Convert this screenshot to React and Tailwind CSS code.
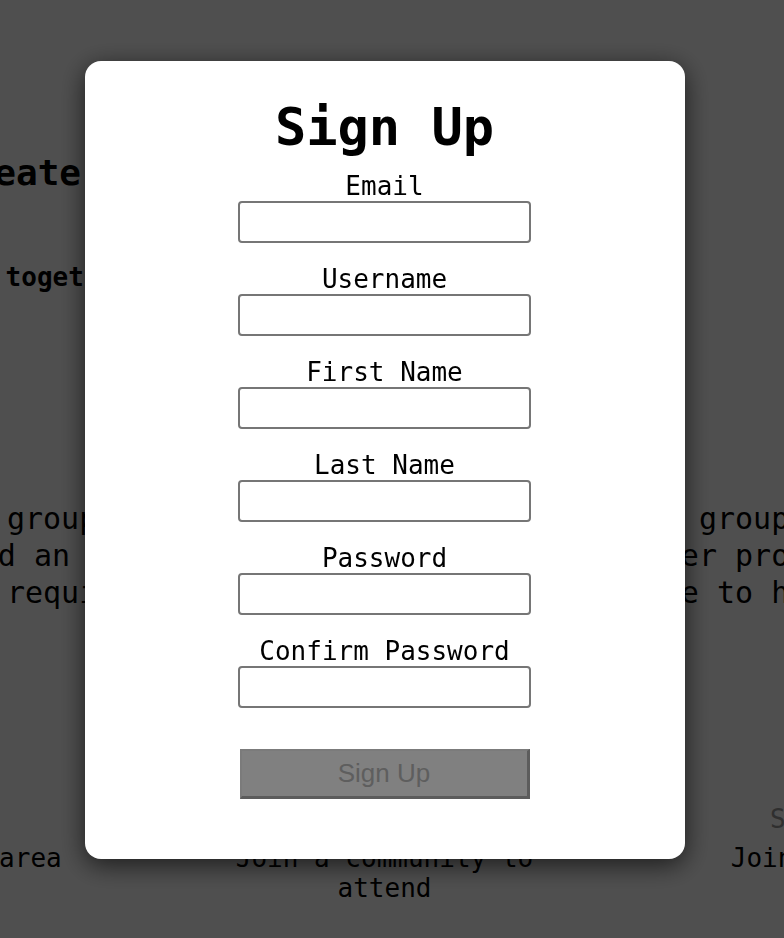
const features = [
  ["Organize a meetup group", "Choose a name and an", "image. No experience required"],
  ["Host an event", "Set a date, pick", "a venue and invite"],
  ["Find any group that matches your hobby", "see other profiles and events nearby", "place to hang out with friends"],
];

const steps = [
  { title: "Browse groups", text: ["Find groups in my area"] },
  { title: "Attend events", text: ["Join a community to", "attend"] },
  { title: "See all groups", text: ["Join groups to meet", "new people"] },
];

const fields = [
  { id: "email", label: "Email", type: "email" },
  { id: "username", label: "Username", type: "text" },
  { id: "firstName", label: "First Name", type: "text" },
  { id: "lastName", label: "Last Name", type: "text" },
  { id: "password", label: "Password", type: "password" },
  { id: "confirmPassword", label: "Confirm Password", type: "password" },
];

const Landing = () => {
  return (
    <div className="w-[769px] pt-[152px]">
      {/* Hero */}
      <h1 className="-ml-[49px] whitespace-pre text-[36px] font-bold leading-[42px]">
        Create, discover and attend
      </h1>
      <h3 className="-ml-[57px] mt-[68px] whitespace-pre text-[26px] font-bold leading-[30px]">
        Get together with people
      </h3>

      {/* Features */}
      <div className="mt-[208px] flex justify-center">
        <div className="flex shrink-0">
          {features.map((lines, i) => (
            <div key={i} className="flex w-[495px] shrink-0 flex-col items-center text-[30px] leading-[37px]">
              {lines.map((line) => (
                <p key={line} className="shrink-0 whitespace-pre">
                  {line}
                </p>
              ))}
            </div>
          ))}
        </div>
      </div>

      {/* Steps */}
      <div className="mt-[193px] flex justify-center">
        <div className="flex shrink-0">
          {steps.map((step) => (
            <div key={step.title} className="flex w-[495px] shrink-0 flex-col items-center text-[26px] leading-[30px]">
              <span className="shrink-0 whitespace-pre text-[#999999]">{step.title}</span>
              <div className="mt-[9px] flex flex-col items-center">
                {step.text.map((line) => (
                  <p key={line} className="shrink-0 whitespace-pre">
                    {line}
                  </p>
                ))}
              </div>
            </div>
          ))}
        </div>
      </div>
    </div>
  );
};

const SignUpModal = () => {
  return (
    <div className="fixed inset-0 flex items-start justify-center bg-black/[0.69] pr-[15px] pt-[61px]">
      <div className="flex w-[600px] flex-col items-center rounded-2xl bg-white pb-[60px] pt-[35px] shadow-[0_6px_26px_rgba(0,0,0,0.65)]">
        <h2 className="text-[52px] font-bold leading-[62px]">Sign Up</h2>

        <form className="mt-[13px] flex flex-col items-center" onSubmit={(e) => e.preventDefault()}>
          <div className="flex flex-col items-center gap-[21px]">
            {fields.map((f) => (
              <div key={f.id} className="flex flex-col items-center">
                <label htmlFor={f.id} className="text-[26px] leading-[30px]">
                  {f.label}
                </label>
                <input
                  id={f.id}
                  type={f.type}
                  className="h-[42px] w-[293px] rounded-[4px] border-2 border-[#767676] bg-white px-2 outline-none"
                />
              </div>
            ))}
          </div>

          <button
            type="submit"
            disabled
            className="mt-[41px] flex h-[50px] w-[290px] items-center justify-center border-b-[3px] border-l-2 border-r-[3px] border-t-2 border-b-[#5c5c5c] border-l-[#7b7b7b] border-r-[#5c5c5c] border-t-[#7b7b7b] bg-[#808080] font-['Liberation_Sans',Arial,sans-serif] text-[26px] text-[#5e5e5e]"
          >
            Sign Up
          </button>
        </form>
      </div>
    </div>
  );
};

export default function App() {
  return (
    <div className="relative h-screen overflow-hidden bg-white font-['DejaVu_Sans_Mono',monospace] text-black">
      <Landing />
      <SignUpModal />
    </div>
  );
}
